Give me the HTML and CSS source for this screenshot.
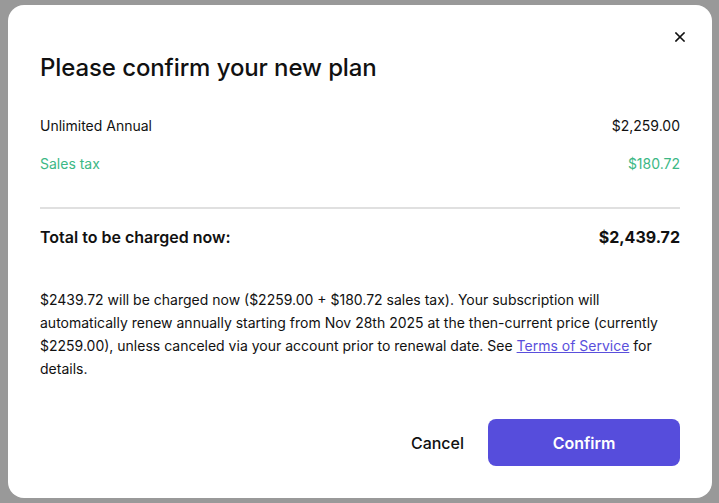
FILE: index.html
```html
<!DOCTYPE html>
<html lang="en">
<head>
<meta charset="utf-8">
<title>Confirm plan</title>
<link rel="stylesheet" href="styles.css">
</head>
<body>
<div class="overlay">
  <div class="modal">
    <div class="close-row">
      <button class="close" aria-label="Close">
        <svg width="10" height="10" viewBox="0 0 10 10"><path d="M1 1L9 9M9 1L1 9" stroke="#111" stroke-width="1.6" stroke-linecap="square"/></svg>
      </button>
    </div>
    <h1 class="title">Please confirm your new plan</h1>
    <div class="lines">
      <div class="line"><span>Unlimited Annual</span><span>$2,259.00</span></div>
      <div class="line tax"><span>Sales tax</span><span>$180.72</span></div>
    </div>
    <div class="divider"></div>
    <div class="total"><span>Total to be charged now:</span><span class="total-amt">$2,439.72</span></div>
    <p class="terms">$2439.72 will be charged now ($2259.00 + $180.72 sales tax). Your subscription will automatically renew annually starting from Nov 28th 2025 at the then-current price (currently $2259.00), unless canceled via your account prior to renewal date. See <a href="#">Terms of Service</a> for details.</p>
    <div class="actions">
      <button class="cancel">Cancel</button>
      <button class="confirm">Confirm</button>
    </div>
  </div>
</div>
</body>
</html>
```
FILE: styles.css
```css
* { box-sizing: border-box; }
html, body { margin: 0; padding: 0; }
body {
  background: #999999;
  font-family: Inter, "Noto Sans", sans-serif;
  color: #111;
  width: 719px;
  height: 503px;
  overflow: hidden;
}
.overlay {
  padding: 5px 7px 5px 8px;
  height: 503px;
}
.modal {
  background: #fff;
  border-radius: 16px;
  height: 493px;
  padding: 24px 32px 0 32px;
  display: flex;
  flex-direction: column;
}
.close-row {
  display: flex;
  justify-content: flex-end;
  height: 16px;
}
.close {
  border: 0;
  background: none;
  padding: 0;
  margin-top: 0;
  margin-right: -8px;
  width: 16px;
  height: 16px;
  display: flex;
  align-items: center;
  justify-content: center;
}
.title {
  margin: 8px 0 0 0;
  font-size: 24px;
  font-weight: 500;
  line-height: 30px;
  letter-spacing: -0.1px;
}
.lines {
  margin-top: 33px;
  display: flex;
  flex-direction: column;
  gap: 18px;
}
.line {
  display: flex;
  justify-content: space-between;
  font-size: 14px;
  line-height: 20px;
}
.tax { color: #3cb885; }
.divider {
  margin-top: 33px;
  height: 2px;
  background: #e0e0e0;
}
.total {
  margin-top: 16px;
  display: flex;
  justify-content: space-between;
  font-size: 16px;
  font-weight: 600;
  line-height: 24px;
}
.total-amt { font-size: 16px; font-weight: 700; }
.terms {
  margin: 39px 0 0 0;
  font-size: 14px;
  line-height: 23px;
}
.terms a { color: #5a4fdc; }
.actions {
  margin-top: 39px;
  display: flex;
  justify-content: flex-end;
  align-items: center;
  gap: 24px;
}
.cancel {
  border: 0;
  background: none;
  font-family: inherit;
  font-size: 16px;
  font-weight: 500;
  color: #111;
  padding: 0;
}
.confirm {
  border: 0;
  width: 192px;
  height: 47px;
  border-radius: 8px;
  background: #564ddc;
  color: #fff;
  font-family: inherit;
  font-size: 16px;
  font-weight: 600;
}
```
